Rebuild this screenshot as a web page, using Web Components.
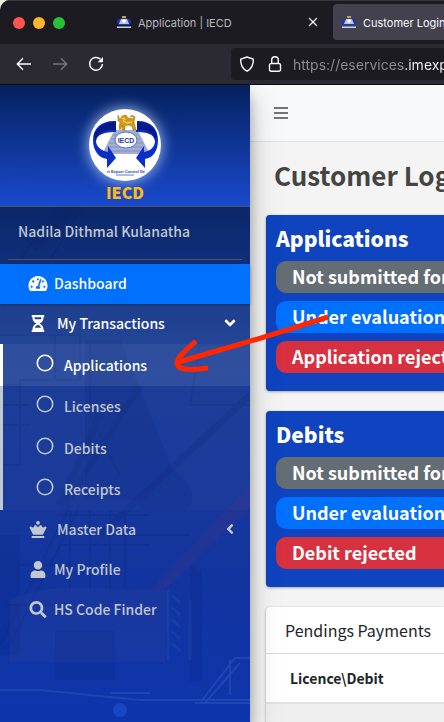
<!DOCTYPE html>
<html lang="en">
<head>
<meta charset="utf-8">
<title>Customer Login | IECD</title>
<style>
	html, body{
		margin: 0;
		height: 100%;
		overflow: hidden;
		background: #e9efdf;
		font-family: "Noto Sans CJK JP", "Open Sans", sans-serif;
		font-size: 14px;
		color: #212529;
	}
</style>
</head>
<body>
<browser-window>
	<browser-tab slot="tabs" label="Application | IECD"></browser-tab>
	<browser-tab slot="tabs" label="Customer Login | IECD" active></browser-tab>
	<side-bar slot="page" brand="IECD" user="Nadila Dithmal Kulanatha">
		<nav-item icon="gauge" active>Dashboard</nav-item>
		<nav-item icon="hourglass" arrow="down" open>My Transactions
			<sub-item slot="sub" active>Applications</sub-item>
			<sub-item slot="sub">Licenses</sub-item>
			<sub-item slot="sub">Debits</sub-item>
			<sub-item slot="sub">Receipts</sub-item>
		</nav-item>
		<nav-item icon="queen" arrow="left">Master Data</nav-item>
		<nav-item icon="user">My Profile</nav-item>
		<nav-item icon="search">HS Code Finder</nav-item>
	</side-bar>
	<main-panel slot="page" heading="Customer Login">
		<status-card heading="Applications">
			<status-pill kind="secondary">Not submitted for evaluation</status-pill>
			<status-pill kind="primary">Under evaluation</status-pill>
			<status-pill kind="danger">Application rejected</status-pill>
		</status-card>
		<status-card heading="Debits">
			<status-pill kind="secondary">Not submitted for evaluation</status-pill>
			<status-pill kind="primary">Under evaluation</status-pill>
			<status-pill kind="danger">Debit rejected</status-pill>
		</status-card>
		<payments-card heading="Pendings Payments" column="Licence\Debit"></payments-card>
	</main-panel>
</browser-window>
<arrow-mark></arrow-mark>
<script>
(function () {
	const icons = {
		gauge: ["0 0 576 512", '<path d="M288 32C128.94 32 0 160.94 0 320c0 52.8 14.25 102.26 39.06 144.8 5.61 9.62 16.3 15.2 27.44 15.2h443c11.14 0 21.83-5.58 27.44-15.2C561.75 422.26 576 372.8 576 320c0-159.06-128.94-288-288-288zm0 64c14.71 0 26.58 10.13 30.32 23.65-1.11 2.26-2.64 4.23-3.45 6.67l-9.22 27.67c-5.13 3.49-10.97 6.01-17.64 6.01-17.67 0-32-14.33-32-32S270.33 96 288 96zM96 384c-17.67 0-32-14.33-32-32s14.33-32 32-32 32 14.33 32 32-14.33 32-32 32zm48-160c-17.67 0-32-14.33-32-32s14.33-32 32-32 32 14.33 32 32-14.33 32-32 32zm246.77-72.41l-61.33 184C343.13 347.33 352 364.54 352 384c0 11.72-3.38 22.55-8.88 32H232.88c-5.5-9.45-8.88-20.28-8.88-32 0-33.94 26.5-61.43 59.9-63.59l61.34-184.01c4.17-12.56 17.73-19.45 30.36-15.17 12.57 4.19 19.35 17.79 15.17 30.36zm14.66 57.2l15.52-46.55c3.47-1.29 7.13-2.23 11.05-2.23 17.67 0 32 14.33 32 32s-14.33 32-32 32c-11.38-.01-21.25-6.1-26.57-15.22zM480 384c-17.67 0-32-14.33-32-32s14.33-32 32-32 32 14.33 32 32-14.33 32-32 32z"/>'],
		hourglass: ["0 0 384 512", '<path d="M360 0H24C10.745 0 0 10.745 0 24v16c0 13.255 10.745 24 24 24 0 90.965 51.016 167.734 120.842 192C75.016 280.266 24 357.035 24 448c-13.255 0-24 10.745-24 24v16c0 13.255 10.745 24 24 24h336c13.255 0 24-10.745 24-24v-16c0-13.255-10.745-24-24-24 0-90.965-51.016-167.734-120.842-192C308.984 231.734 360 154.965 360 64c13.255 0 24-10.745 24-24V24c0-13.255-10.745-24-24-24zm-75.078 384H99.08c17.059-46.797 52.096-80 92.92-80 40.821 0 75.862 33.196 92.922 80zm.019-256H99.078C91.988 108.548 88 86.748 88 64h208c0 22.805-3.987 44.587-11.059 64z"/>'],
		queen: ["0 0 512 512", '<path d="M256 112a56 56 0 1 0-56-56 56 56 0 0 0 56 56zm176 336H80a16 16 0 0 0-16 16v32a16 16 0 0 0 16 16h352a16 16 0 0 0 16-16v-32a16 16 0 0 0-16-16zm72.87-263.84l-28.51-15.92c-7.44-5-16.91-2.46-22.29 4.68a47.59 47.59 0 0 1-47.23 18.23C383.7 186.86 368 164.93 368 140.4a12.4 12.4 0 0 0-12.4-12.4h-38.81c-6 0-11.45 4.38-12.4 10.38a48.93 48.93 0 0 1-96.77 0c-.95-6-6.4-10.38-12.41-10.38h-38.8a12.4 12.4 0 0 0-12.4 12.4c0 19.9-12.6 43.6-37 50.7a47.6 47.6 0 0 1-49-18.2c-4.9-6.7-14.5-9.6-22-4.6L7.130 184.160a12.930 12.930 0 0 0-5.790 16.820L110.600 416h290.800l109.260-215.020a12.930 12.930 0 0 0-5.790-16.820z"/>'],
		user: ["0 0 448 512", '<path d="M224 256c70.7 0 128-57.3 128-128S294.7 0 224 0 96 57.3 96 128s57.3 128 128 128zm89.6 32h-16.7c-22.2 10.2-46.9 16-72.9 16s-50.6-5.8-72.9-16h-16.7C60.2 288 0 348.2 0 422.4V464c0 26.5 21.5 48 48 48h352c26.5 0 48-21.5 48-48v-41.6c0-74.2-60.2-134.4-134.4-134.4z"/>'],
		search: ["0 0 512 512", '<path d="M505 442.7L405.3 343c-4.5-4.5-10.6-7-17-7H372c27.6-35.3 44-79.7 44-128C416 93.1 322.9 0 208 0S0 93.1 0 208s93.1 208 208 208c48.3 0 92.7-16.4 128-44v16.3c0 6.4 2.5 12.5 7 17l99.7 99.7c9.4 9.4 24.6 9.4 33.9 0l28.3-28.3c9.4-9.4 9.4-24.6.1-34zM208 336c-70.7 0-128-57.2-128-128 0-70.7 57.2-128 128-128 70.7 0 128 57.2 128 128 0 70.7-57.2 128-128 128z"/>'],
		left: ["0 0 256 512", '<path d="M31.7 239l136-136c9.4-9.4 24.6-9.4 33.9 0l22.6 22.6c9.4 9.4 9.4 24.6 0 33.9L127.9 256l96.4 96.4c9.4 9.4 9.4 24.6 0 33.9L201.7 409c-9.4 9.4-24.6 9.4-33.9 0l-136-136c-9.5-9.4-9.5-24.6-.1-34z"/>'],
		down: ["76 76 360 360", '<path transform="rotate(-90 256 256) translate(128 0)" d="M31.7 239l136-136c9.4-9.4 24.6-9.4 33.9 0l22.6 22.6c9.4 9.4 9.4 24.6 0 33.9L127.9 256l96.4 96.4c9.4 9.4 9.4 24.6 0 33.9L201.7 409c-9.4 9.4-24.6 9.4-33.9 0l-136-136c-9.5-9.4-9.5-24.6-.1-34z"/>'],
		ring: ["0 0 18 18", '<circle cx="9" cy="9" r="7.7" fill="none" stroke="currentColor" stroke-width="1.6"/>'],
		bars: ["0 0 14 14", '<path d="M0 1h14v2H0zM0 6h14v2H0zM0 11h14v2H0z"/>'],
		close: ["0 0 10 10", '<path d="M1 1l8 8M9 1l-8 8" fill="none" stroke="currentColor" stroke-width="1.1"/>'],
		back: ["0 0 16 16", '<path d="M15 8H1.500M7 2.300L1.300 8 7 13.700" fill="none" stroke="currentColor" stroke-width="1.400"/>'],
		forward: ["0 0 16 16", '<path d="M1 8h13.500M9 2.300L14.700 8 9 13.700" fill="none" stroke="currentColor" stroke-width="1.400"/>'],
		reload: ["0 0 16 16", '<path d="M12.500 3.300A6.400 6.400 0 1 0 14.400 8" fill="none" stroke="currentColor" stroke-width="1.500"/><path d="M15 1v5.300H9.700z"/>'],
		shield: ["0 0 16 16", '<path d="M8 1l6.300 2.200c.2 5-1.300 9.300-6.300 12-5-2.700-6.500-7-6.300-12z" fill="none" stroke="currentColor" stroke-width="1.400" stroke-linejoin="round"/>'],
		lock: ["0 0 14 16", '<path d="M3.700 7.500V4a3.300 3.300 0 0 1 6.600 0v3.500M3 7.500h8a1.500 1.500 0 0 1 1.500 1.500v4.700a1.500 1.500 0 0 1-1.500 1.500H3a1.500 1.500 0 0 1-1.500-1.500V9A1.500 1.500 0 0 1 3 7.500z" fill="none" stroke="currentColor" stroke-width="1.400"/>'],
		favicon: ["0 0 14 14", '<path d="M0 7C0 2 14 2 14 7L12 10H2z" fill="#1638c4"/><path d="M4 4h6l2 5H2z" fill="#b9c3e6"/><circle cx="7" cy="6" r="1.800" fill="#fff"/><path d="M5 1h4v2H5z" fill="#d0a42c"/><path d="M0 11.500h14v1.500H0z" fill="#c6d4ef"/>']
	};

	// every element gets an open shadow root with its own style
	class Base extends HTMLElement{
		connectedCallback(){
			if(this.shadowRoot) return;
			this.attachShadow({ mode: 'open' });
			const template = document.createElement('template');
			template.innerHTML = this.render();
			this.shadowRoot.appendChild(template.content);
		}
		attr(name){
			return this.getAttribute(name) || "";
		}
	}

	class UiIcon extends Base{
		render(){
			const icon = icons[this.attr("name")];
			return `
				<style>
					:host{ display: inline-flex; flex: none; width: 16px; height: 16px; }
					svg{ width: 100%; height: 100%; fill: currentColor; }
				</style>
				<svg viewBox="${icon[0]}" aria-hidden="true">${icon[1]}</svg>
			`;
		}
	}

	class BrowserWindow extends Base{
		render(){
			return `
				<style>
					:host{
						display: flex;
						flex-direction: column;
						height: 100vh;
						overflow: hidden;
						border-top-left-radius: 10px;
						background: #1c1b22;
						font-family: Inter, "Liberation Sans", sans-serif;
					}
					.strip{
						display: flex;
						flex: none;
						height: 43px;
						border-top: 1px solid #38373d;
						overflow: hidden;
					}
					.lights{
						display: flex;
						flex: none;
						align-items: center;
						gap: 8px;
						padding: 0 43px 0 13px;
					}
					.lights i{ width: 12px; height: 12px; border-radius: 50%; background: #ff544d; }
					.lights i:nth-child(2){ background: #ffb429; }
					.lights i:nth-child(3){ background: #25c138; }
					.bar{
						display: flex;
						flex: none;
						align-items: center;
						height: 40px;
						padding-left: 16px;
						background: #2b2a33;
						border-bottom: 1px solid #0c0c0d;
						color: #fbfbfe;
					}
					button{
						display: flex;
						border: 0;
						padding: 0;
						margin-right: 20px;
						background: none;
						color: inherit;
					}
					button:disabled{ color: #76757d; }
					.address{
						display: flex;
						flex: 1;
						align-items: center;
						min-width: 0;
						height: 32px;
						margin-left: 107px;
						padding-left: 8px;
						border-radius: 4px 0 0 4px;
						background: #1c1b22;
					}
					.address ui-icon{ margin-right: 13px; }
					.address ui-icon + ui-icon{ width: 14px; margin-right: 11px; }
					input{
						flex: 1;
						min-width: 0;
						border: 0;
						padding: 2px 0 0;
						outline: 0;
						font: 14px/20px Inter, "Liberation Sans", sans-serif;
						/* dim scheme and subdomain, bright domain */
						background: linear-gradient(90deg, #8f8e96 110px, #fbfbfe 110px);
						-webkit-background-clip: text;
						background-clip: text;
						color: transparent;
					}
					.page{
						display: flex;
						flex: 1;
						min-height: 0;
						overflow: hidden;
						font-family: "Noto Sans CJK JP", "Open Sans", sans-serif;
					}
				</style>
				<div class="strip">
					<div class="lights"><i></i><i></i><i></i></div>
					<slot name="tabs"></slot>
				</div>
				<div class="bar">
					<button aria-label="Back"><ui-icon name="back"></ui-icon></button>
					<button aria-label="Forward" disabled><ui-icon name="forward"></ui-icon></button>
					<button aria-label="Reload"><ui-icon name="reload"></ui-icon></button>
					<div class="address">
						<ui-icon name="shield"></ui-icon>
						<ui-icon name="lock"></ui-icon>
						<input aria-label="Address" value="https://eservices.imexport.gov.lk">
					</div>
				</div>
				<div class="page"><slot name="page"></slot></div>
			`;
		}
	}

	class BrowserTab extends Base{
		render(){
			return `
				<style>
					:host{
						display: flex;
						flex: none;
						align-items: center;
						box-sizing: border-box;
						width: 222px;
						height: 36px;
						margin: 3px 3px 0 0;
						padding: 0 12px 0 9px;
						border-radius: 4px;
						font-size: 11px;
						color: #b9b9bd;
					}
					:host([active]){ background: #42414d; color: #fbfbfe; }
					.icon{ width: 14px; height: 14px; margin-right: 7px; }
					span{ flex: 1; line-height: 16px; padding-top: 2px; white-space: nowrap; }
					button{ display: flex; border: 0; padding: 0; background: none; color: #fbfbfe; }
					button ui-icon{ width: 10px; height: 10px; }
				</style>
				<ui-icon class="icon" name="favicon"></ui-icon>
				<span>${this.attr("label")}</span>
				<button aria-label="Close tab"><ui-icon name="close"></ui-icon></button>
			`;
		}
	}

	class IecdLogo extends Base{
		render(){
			return `
				<style>
					:host{ display: block; width: 72px; height: 72px; border-radius: 50%; background: #fff; box-shadow: 0 0 14px 1px rgba(190, 215, 255, .8); }
					svg{ display: block; width: 100%; height: 100%; font-family: "Liberation Sans", sans-serif; }
				</style>
				<svg viewBox="0 0 72 72" role="img" aria-label="IECD">
					<path d="M26 20h22l13 25H13z" fill="#a3aed3"/>
					<path d="M24 26h26M22 30h30M20 34h34M18 38h38M16 42h42" stroke="#8391c1"/>
					<path d="M27 12C13 11 4 19 4 31c0 11 6 18 14 19v9l9-10-8-12v6C12 42 7 37 7 32c1-7 9-9 20-9z" fill="#0a2fc8"/>
					<path d="M47 12c14-1 22 7 22 19 0 11-5 18-13 19v9l-9-10 8-12v6c7-1 11-6 11-11-1-7-8-9-19-9z" fill="#0a2fc8"/>
					<path d="M5 27c2-9 10-14 22-14v8c-11-1-20 3-20 11z" fill="#04198a"/>
					<path d="M68 27c-2-9-9-14-21-14v8c11-1 19 3 19 11z" fill="#04198a"/>
					<ellipse cx="37" cy="31" rx="11" ry="8" fill="#fff" stroke="#5b70c2"/>
					<text x="37" y="34" font-size="7" font-weight="bold" text-anchor="middle" fill="#2543ad">IECD</text>
					<path d="M27 5h21v16H27z" fill="#fff"/>
					<path d="M30 19l1-6-2-1V6l2 5 2-4 4-1 2 3 6 1-1-3-3 1 2-2 3 2-1 5 1 4 1 4h-3l-1-4-4-1-3 1v4h-3v-5l-2 5z" fill="#d69a17" stroke="#996507" stroke-width=".5"/>
					<path d="M33 9l3 1-2 2 4 2 5-1" fill="none" stroke="#ffe18a"/>
					<text x="37" y="64" font-size="4" font-weight="bold" text-anchor="middle" fill="#29439c">rt Export Control De</text>
					<path d="M27 66h18" stroke="#607bd0"/>
				</svg>
			`;
		}
	}

	class SideBar extends Base{
		render(){
			return `
				<style>
					:host{
						display: grid;
						flex: none;
						grid-template: 100% / 100%;
						width: 250px;
						z-index: 1;
						background: linear-gradient(#0a2769 120px, #183b93 260px, #17389a 400px, #12349f 500px, #0d35ac);
						box-shadow: 0 14px 28px rgba(0, 0, 0, .25), 0 10px 10px rgba(0, 0, 0, .22);
						color: #c2c7d0;
						font-weight: 500;
					}
					.photo, .content{ grid-area: 1 / 1; min-width: 0; }
					.photo{ width: 100%; height: 100%; }
					.content{ z-index: 1; }
					.brand{
						display: flex;
						flex-direction: column;
						align-items: center;
						padding: 24px 0 2px;
						background: linear-gradient(#04205ce6, #1c4fdcdd);
						border-bottom: 1px solid #4b545c;
						color: #ffb914;
						font-size: 16px;
						font-weight: 900;
						line-height: 23px;
					}
					.user{
						margin: 0 8px 4px;
						padding: 13px 10px 17px;
						border-bottom: 1px solid #4b545c;
						line-height: 22px;
					}
				</style>
				<svg class="photo" viewBox="0 0 250 637" preserveAspectRatio="xMidYMin slice" aria-hidden="true">
					<g fill="none" stroke="#081f66" opacity=".16">
						<path d="M0 110L130 0M30 160L250-40" stroke-width="16"/>
						<path d="M0 180h250M20 175L70 100M50 175L95 100" stroke-width="2"/>
						<path d="M0 250h80v45H20v80M90 260v70l30 60M55 250v45M200 260h50v60h-60zM0 300h20v80H0M0 320h30M0 340h30" stroke-width="2"/>
						<path d="M60 420L100 330M65 420L140 300M250 310L100 450" stroke-width="7"/>
						<path d="M70 425v80M90 425v80M110 425v80M125 425v80M60 430h90M60 460h90M105 450h85" stroke-width="2"/>
						<path d="M0 560L70 420M10 560L80 420M5 520h50M20 480h50" stroke-width="2"/>
					</g>
					<g fill="#071f79" opacity=".18">
						<path d="M85 255l35 0 65 160H85zM140 395q25-25 45 0 15 20 0 30h-45zM55 545h60v50H55zM190 480l12 6v110h-12zM0 450h20v120H0z"/>
					</g>
					<path d="M150 505L250 400v22L165 505z" fill="#53307f" opacity=".22"/>
					<path d="M10 515q30-15 80-12l75 2v72H10z" fill="#31459c" opacity=".25"/>
					<path d="M168 505v70M190 515v60M172 510l8 8M172 522l8 8M172 534l8 8M172 546l8 8M172 558l8 8" stroke="#405fba" stroke-width="3" opacity=".2"/>
					<path d="M0 605h40l100 10h110M200 618l35-45h15M205 618l35-40M230 575v35M195 618h55M110 608h40" fill="none" stroke="#3f70cc" stroke-width="2" opacity=".3"/>
					<circle cx="120" cy="625" r="7" fill="#2458de" opacity=".5"/>
				</svg>
				<div class="content">
					<div class="brand"><iecd-logo></iecd-logo>${this.attr("brand")}</div>
					<div class="user">${this.attr("user")}</div>
					<nav><slot></slot></nav>
				</div>
			`;
		}
	}

	class NavItem extends Base{
		render(){
			const arrow = this.attr("arrow");
			return `
				<style>
					:host{ display: block; }
					a{
						display: flex;
						align-items: center;
						box-sizing: border-box;
						height: 40px;
						padding: 0 14px 2px 28px;
						color: inherit;
						text-decoration: none;
						line-height: 24px;
						white-space: nowrap;
					}
					:host([active]) a{ background: #0070ff; color: #fff; box-shadow: 0 1px 3px rgba(0, 0, 0, .3); }
					:host([open]) a{ background: rgba(255, 255, 255, .05); color: #fff; }
					.icon{ width: 20px; height: 17px; margin-right: 6px; }
					.tree .icon{ margin-right: 9px; }
					span{ flex: 1; }
					.arrow{ width: 12px; }
					.sub{ display: grid; grid-auto-rows: 1fr; min-height: 166px; }
				</style>
				<a href="#" class="${arrow ? "tree" : ""}">
					<ui-icon class="icon" name="${this.attr("icon")}"></ui-icon>
					<span><slot></slot></span>
					${arrow ? `<ui-icon class="arrow" name="${arrow}"></ui-icon>` : ""}
				</a>
				${this.hasAttribute("open") ? `<div class="sub"><slot name="sub"></slot></div>` : ""}
			`;
		}
	}

	class SubItem extends Base{
		render(){
			return `
				<style>
					:host{
						display: grid;
						border-left: 3px solid #c2c7d0;
						background: rgba(255, 255, 255, .02);
					}
					:host([active]){ border-color: #fff; background: rgba(255, 255, 255, .1); color: #fff; }
					a{
						display: flex;
						align-items: center;
						padding-left: 33px;
						color: inherit;
						text-decoration: none;
						line-height: 24px;
					}
					ui-icon{ width: 18px; height: 18px; margin: 0 10px 4px 0; }
				</style>
				<a href="#"><ui-icon name="ring"></ui-icon><span><slot></slot></span></a>
			`;
		}
	}

	class MainPanel extends Base{
		render(){
			return `
				<style>
					:host{ display: block; flex: 1; min-width: 0; overflow: hidden; background: #f4f4f4; }
					header{
						display: flex;
						align-items: center;
						height: 56px;
						padding-left: 24px;
						background: #f8f9fa;
						border-bottom: 1px solid #dee2e6;
						color: #747474;
					}
					button{ display: flex; border: 0; padding: 0; background: none; color: inherit; }
					button ui-icon{ width: 14px; height: 14px; }
					h1{
						margin: 0;
						padding: 13px 24px 20px;
						font-size: 26px;
						font-weight: 700;
						line-height: 40px;
						color: #444443;
						white-space: nowrap;
					}
					.cards{ display: grid; gap: 20px; grid-template-columns: minmax(0, 1fr); padding-left: 16px; }
				</style>
				<header><button aria-label="Toggle menu"><ui-icon name="bars"></ui-icon></button></header>
				<h1>${this.attr("heading")}</h1>
				<div class="cards"><slot></slot></div>
			`;
		}
	}

	class StatusCard extends Base{
		render(){
			return `
				<style>
					:host{
						display: block;
						padding: 9px 0 18px 10px;
						border-radius: 4px 0 0 4px;
						background: #0f43bf;
						box-shadow: 0 0 1px rgba(0, 0, 0, .13), 0 1px 3px rgba(0, 0, 0, .3);
						color: #fff;
					}
					h2{ margin: 0 0 9px; font-size: 21px; font-weight: 900; line-height: 28px; }
					.pills{ display: grid; gap: 8px; }
				</style>
				<h2>${this.attr("heading")}</h2>
				<div class="pills"><slot></slot></div>
			`;
		}
	}

	class StatusPill extends Base{
		render(){
			return `
				<style>
					:host{
						display: block;
						overflow: hidden;
						padding: 0 0 2px 16px;
						border-radius: 10px 0 0 10px;
						background: #656d74;
						font-size: 18px;
						font-weight: 700;
						line-height: 30px;
						white-space: nowrap;
					}
					:host([kind="primary"]){ background: #0070ff; }
					:host([kind="danger"]){ background: #d7303f; }
				</style>
				<slot></slot>
			`;
		}
	}

	class PaymentsCard extends Base{
		render(){
			return `
				<style>
					:host{
						display: block;
						border-radius: 4px 0 0 0;
						background: #fff;
						box-shadow: 0 0 1px rgba(0, 0, 0, .2), 0 1px 3px rgba(0, 0, 0, .3);
					}
					h3{
						margin: 0;
						padding: 11px 0 11px 19px;
						border-bottom: 1px solid #d9dadb;
						font-size: 16px;
						font-weight: 400;
						line-height: 24px;
						white-space: nowrap;
					}
					table{ width: 100%; border-collapse: collapse; }
					th{
						height: 48px;
						padding: 0 24px;
						border-bottom: 2px solid #dee2e6;
						text-align: left;
						line-height: 24px;
					}
					td{ height: 48px; padding: 0; background: #efefef; }
				</style>
				<h3>${this.attr("heading")}</h3>
				<table>
					<thead><tr><th>${this.attr("column")}</th></tr></thead>
					<tbody><tr><td></td></tr></tbody>
				</table>
			`;
		}
	}

	// hand drawn arrow lying over the page
	class ArrowMark extends Base{
		render(){
			return `
				<style>
					:host{ position: absolute; left: 172px; top: 310px; z-index: 5; pointer-events: none; }
					svg{ display: block; width: 160px; height: 66px; }
				</style>
				<svg viewBox="0 0 160 66" aria-hidden="true" fill="none" stroke="#ff2600" stroke-width="5" stroke-linejoin="round">
					<path d="M156 7Q110 22 65 35T4 53"/>
					<path d="M24 31C14 40 4 48 5 54c2 7 16 6 31 4"/>
				</svg>
			`;
		}
	}

	window.customElements.define('ui-icon', UiIcon);
	window.customElements.define('browser-window', BrowserWindow);
	window.customElements.define('browser-tab', BrowserTab);
	window.customElements.define('iecd-logo', IecdLogo);
	window.customElements.define('side-bar', SideBar);
	window.customElements.define('nav-item', NavItem);
	window.customElements.define('sub-item', SubItem);
	window.customElements.define('main-panel', MainPanel);
	window.customElements.define('status-card', StatusCard);
	window.customElements.define('status-pill', StatusPill);
	window.customElements.define('payments-card', PaymentsCard);
	window.customElements.define('arrow-mark', ArrowMark);
}
)();
</script>
</body>
</html>
